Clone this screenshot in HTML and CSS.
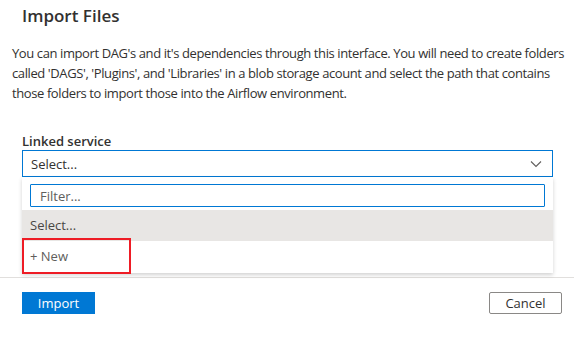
FILE: index.html
```html
<!DOCTYPE html>
<html lang="en">
<head>
    <meta charset="UTF-8">
    <title>Import Files</title>
    <link rel="stylesheet" href="styles.css">
</head>
<body>

<div class="dialog">
    <h2 class="title">Import Files</h2>

    <p class="intro">You can import DAG's and it's dependencies through this interface. You will need to create folders called 'DAGS', 'Plugins', and 'Libraries' in a blob storage acount and select the path that contains those folders to import those into the Airflow environment.</p>

    <div class="field">
        <label class="label">Linked service</label>
        <div class="combo">
            <div class="combo-box">
                <span>Select...</span>
                <svg class="chevron" width="12" height="8" viewBox="0 0 12 8"><path d="M1 1.5 L6 6.5 L11 1.5" fill="none" stroke="#605e5c" stroke-width="1.1"/></svg>
            </div>
            <div class="combo-panel">
                <div class="filter-wrap">
                    <input class="filter" type="text" placeholder="Filter...">
                </div>
                <div class="option selected">Select...</div>
                <div class="option">+ New</div>
                <span class="highlight"></span>
            </div>
        </div>
    </div>

    <div class="footer">
        <button class="btn primary">Import</button>
        <button class="btn">Cancel</button>
    </div>
</div>

</body>
</html>
```

FILE: styles.css
```css
body {
    margin: 0;
    background-color: white;
    font-family: "Open Sans", "Noto Sans", Arial, sans-serif;
    color: #323130;
}
.dialog {
    padding-top: 4px;
}
.title {
    margin: 0 0 15px 22px;
    font-size: 17px;
    font-weight: 600;
    line-height: 24px;
}
.intro {
    margin: 0 0 29px 12px;
    font-size: 13px;
    line-height: 20px;
    letter-spacing: -0.4px;
}
.field {
    margin: 0 21px 0 22px;
}
.label {
    display: block;
    font-size: 13px;
    font-weight: 600;
    line-height: 18px;
}
.combo-box {
    display: flex;
    align-items: center;
    justify-content: space-between;
    height: 25px;
    padding: 0 8px;
    border: 1px solid #0078d4;
    font-size: 13px;
}
.chevron {
    margin-right: 2px;
}
.combo-panel {
    position: relative;
    background-color: white;
    box-shadow: 0 2px 4px rgba(0,0,0,0.18);
    padding-top: 7px;
    padding-bottom: 1px;
}
.filter-wrap {
    padding: 0 8px 3px 8px;
}
.filter {
    display: block;
    box-sizing: border-box;
    width: 100%;
    height: 23px;
    padding: 0 9px;
    border: 1px solid #0078d4;
    border-radius: 1px;
    font-family: inherit;
    font-size: 13px;
    color: #323130;
    outline: none;
}
.filter::placeholder {
    color: #605e5c;
}
.option {
    height: 31px;
    line-height: 31px;
    padding: 0 8px;
    font-size: 13px;
    color: #605e5c;
}
.option.selected {
    background-color: #e8e6e4;
    color: #484644;
}
.highlight {
    position: absolute;
    left: 0;
    top: 61px;
    width: 105px;
    height: 32px;
    border: 2px solid #ee1c25;
}
.footer {
    display: flex;
    justify-content: space-between;
    margin-top: 4px;
    padding: 14px 12px 0 22px;
    border-top: 1px solid #e1dfdd;
}
.btn {
    box-sizing: border-box;
    width: 73px;
    height: 22px;
    padding: 0;
    background-color: white;
    border: 1px solid #8a8886;
    border-radius: 2px;
    font-family: inherit;
    font-size: 13px;
    color: #323130;
}
.btn.primary {
    background-color: #0078d4;
    border-color: #0078d4;
    border-radius: 0;
    color: white;
}
```
